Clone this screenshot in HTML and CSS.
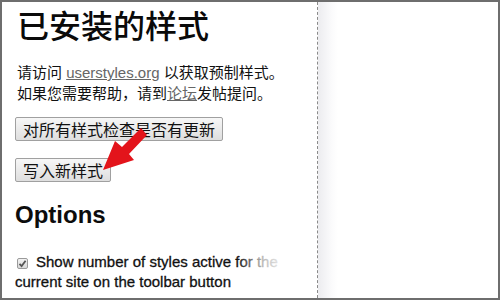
FILE: index.html
```html
<!DOCTYPE html>
<html lang="zh-CN">
<head>
<meta charset="utf-8">
<title>已安装的样式</title>
<link rel="stylesheet" href="styles.css">
</head>
<body>
<div class="frame">
  <div class="main">
    <h1 class="title">已安装的样式</h1>
    <p class="intro">请访问 <a class="link" href="#">userstyles.org</a> 以获取预制样式。<br>如果您需要帮助，请到<a class="link" href="#">论坛</a>发帖提问。</p>
    <div class="actions">
      <button class="btn">对所有样式检查是否有更新</button>
      <button class="btn">写入新样式</button>
    </div>
    <h2 class="options-title">Options</h2>
    <div class="option">
      <span class="check"><svg width="9" height="9" viewBox="0 0 9 9"><path d="M1.5 4.8 L3.6 7 L7.6 1.8" fill="none" stroke="#555" stroke-width="1.8"/></svg></span><span class="option-text">Show number of styles active for the current site on the toolbar button</span>
      <span class="fade"></span>
    </div>
    <svg class="arrow" width="52" height="50" viewBox="0 0 52 50">
      <polygon points="3,45 15,16 22,22 41,3 47,10 29,29 34,35" fill="#e3141b"/>
    </svg>
  </div>
  <div class="divider"></div>
  <div class="side"></div>
</div>
</body>
</html>
```
FILE: styles.css
```css
html, body {
  margin: 0;
  padding: 0;
  background: #fff;
}
.frame {
  box-sizing: border-box;
  width: 500px;
  height: 300px;
  border: 2px solid #6e6e6e;
  display: flex;
  overflow: hidden;
  background: #fff;
}
.main {
  position: relative;
  width: 315px;
  flex: none;
  box-sizing: border-box;
  padding: 2px 0 0 13px;
  font-family: "Liberation Sans", "Noto Sans CJK SC", sans-serif;
  color: #111;
}
.title {
  margin: 0 0 0 2px;
  font-family: "Noto Sans CJK SC", serif;
  font-weight: 500;
  font-size: 32px;
  line-height: 40px;
  color: #0a0a0a;
}
.intro {
  margin: 18px 0 0 2px;
  font-size: 15px;
  line-height: 21px;
}
.link {
  color: #666;
  text-decoration: underline;
}
.actions {
  margin-top: 13px;
  display: flex;
  flex-direction: column;
  align-items: flex-start;
  gap: 17px;
}
.btn {
  font-family: "Noto Sans CJK SC", sans-serif;
  font-size: 16px;
  line-height: 22px;
  height: 24px;
  padding: 0 7px;
  border: 1px solid #a0a0a0;
  border-radius: 2px;
  background: linear-gradient(#f7f7f7, #dedede);
  color: #111;
}
.options-title {
  margin: 19px 0 0 0;
  font-size: 24px;
  line-height: 28px;
  font-weight: 700;
  color: #0c0c0c;
}
.option {
  position: relative;
  width: 295px;
  margin-top: 23px;
  font-size: 15px;
  line-height: 20px;
  color: #111;
}
.check {
  box-sizing: border-box;
  display: inline-flex;
  vertical-align: -1px;
  width: 11px;
  height: 11px;
  margin: 0 8px 0 2px;
  border: 1px solid #9a9a9a;
  border-radius: 2px;
  background: linear-gradient(#f2f2f2, #d8d8d8);
  align-items: center;
  justify-content: center;
}
.option-text {
  -webkit-text-stroke: 0.3px #111;
}
.fade {
  position: absolute;
  left: 222px;
  top: 0;
  width: 74px;
  height: 42px;
  background: linear-gradient(90deg, rgba(255,255,255,0) 0%, rgba(255,255,255,0.7) 35%, #fff 70%);
}
.arrow {
  position: absolute;
  left: 98px;
  top: 123px;
}
.divider {
  width: 0;
  flex: none;
  border-left: 1px dashed #8a8a8a;
}
.side {
  flex: 1;
  background: linear-gradient(90deg, #ececef 0, #fbfbfc 14px, #fff 20px);
}
```
